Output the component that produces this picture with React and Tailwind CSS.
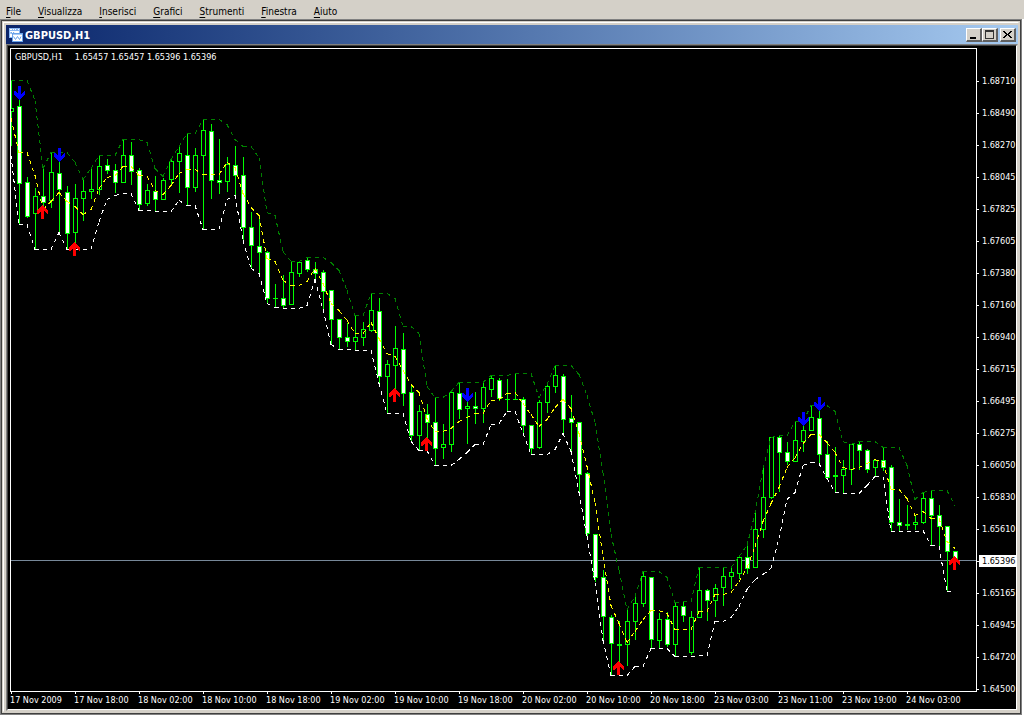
import React from "react";

const MENU = ["File", "Visualizza", "Inserisci", "Grafici", "Strumenti", "Finestra", "Aiuto"];

const PRICES = [
  "1.68710", "1.68490", "1.68270", "1.68045", "1.67825", "1.67605", "1.67380",
  "1.67160", "1.66940", "1.66715", "1.66495", "1.66275", "1.66050", "1.65830",
  "1.65610", "1.65396", "1.65165", "1.64945", "1.64720", "1.64500",
];
const CURRENT = "1.65396";

const TIMES = [
  "17 Nov 2009", "17 Nov 18:00", "18 Nov 02:00", "18 Nov 10:00", "18 Nov 18:00",
  "19 Nov 02:00", "19 Nov 10:00", "19 Nov 18:00", "20 Nov 02:00", "20 Nov 10:00",
  "20 Nov 18:00", "23 Nov 03:00", "23 Nov 11:00", "23 Nov 19:00", "24 Nov 03:00",
];

// [high, body top, body bottom, low, falling]
const CANDLES = [
  [80, 108, 112, 146, 0], [100, 106, 184, 224, 1], [177, 182, 217, 218, 1], [188, 196, 214, 249, 0],
  [168, 196, 203, 208, 1], [152, 172, 201, 208, 0], [162, 173, 190, 232, 1], [186, 192, 234, 249, 1],
  [184, 198, 233, 249, 0], [179, 191, 199, 221, 0], [168, 189, 192, 199, 0], [155, 166, 190, 195, 0],
  [159, 165, 171, 174, 1], [164, 170, 183, 193, 1], [139, 155, 183, 183, 0], [142, 155, 172, 185, 1],
  [168, 170, 205, 210, 1], [184, 190, 204, 206, 0], [176, 191, 200, 211, 1], [178, 180, 200, 200, 0],
  [159, 161, 180, 184, 0], [146, 153, 162, 193, 0], [133, 155, 188, 205, 1], [148, 155, 188, 192, 0],
  [119, 130, 156, 229, 0], [124, 131, 181, 199, 1], [139, 180, 183, 194, 1], [157, 164, 182, 192, 0],
  [146, 165, 176, 195, 1], [157, 175, 228, 240, 1], [212, 227, 246, 268, 1], [215, 246, 253, 273, 1],
  [251, 252, 299, 303, 1], [284, 298, 299, 307, 0], [275, 298, 306, 308, 1], [261, 272, 305, 305, 0],
  [261, 262, 274, 277, 0], [257, 260, 270, 272, 1], [262, 269, 274, 279, 1], [270, 272, 292, 309, 1],
  [290, 290, 320, 344, 1], [319, 319, 338, 349, 1], [323, 337, 342, 347, 1], [315, 337, 342, 350, 0],
  [322, 329, 338, 346, 0], [293, 310, 331, 332, 0], [298, 311, 377, 383, 1], [360, 364, 377, 413, 0],
  [326, 348, 366, 390, 0], [333, 349, 394, 406, 1], [386, 392, 436, 441, 1], [405, 411, 436, 450, 0],
  [404, 414, 423, 438, 1], [397, 422, 449, 465, 1], [424, 444, 448, 459, 0], [391, 392, 445, 452, 0],
  [382, 393, 410, 419, 1], [402, 406, 409, 444, 0], [392, 406, 409, 424, 1], [382, 387, 409, 423, 0],
  [375, 378, 390, 397, 0], [378, 380, 399, 401, 1], [379, 399, 400, 411, 0], [373, 399, 400, 400, 0],
  [397, 399, 426, 433, 1], [425, 425, 449, 454, 1], [400, 402, 448, 449, 0], [384, 386, 403, 413, 0],
  [365, 375, 387, 393, 0], [374, 376, 420, 433, 1], [395, 418, 423, 451, 1], [422, 422, 475, 492, 1],
  [472, 473, 534, 536, 1], [534, 534, 578, 582, 1], [570, 577, 617, 640, 1], [615, 617, 644, 675, 1],
  [621, 644, 646, 663, 0], [609, 621, 645, 666, 0], [596, 603, 622, 640, 0], [571, 576, 604, 607, 0],
  [577, 577, 640, 648, 1], [613, 619, 641, 648, 0], [612, 619, 645, 647, 1], [602, 606, 645, 656, 0],
  [601, 606, 616, 622, 1], [611, 617, 653, 655, 0], [567, 590, 618, 618, 0], [589, 590, 601, 621, 1],
  [584, 588, 601, 617, 0], [567, 576, 588, 606, 0], [567, 572, 577, 589, 0], [556, 557, 574, 579, 0],
  [545, 557, 569, 574, 1], [513, 529, 568, 568, 0], [468, 497, 530, 538, 0], [437, 437, 498, 499, 0],
  [435, 437, 453, 492, 1], [442, 452, 462, 465, 1], [421, 440, 462, 462, 0], [426, 430, 442, 452, 0],
  [405, 417, 431, 431, 0], [411, 418, 455, 463, 1], [441, 454, 478, 478, 1], [447, 475, 477, 492, 0],
  [460, 469, 476, 493, 0], [444, 444, 470, 485, 0], [441, 444, 451, 470, 1], [449, 450, 470, 473, 1],
  [460, 460, 468, 476, 0], [447, 460, 468, 471, 1], [465, 467, 523, 531, 1], [499, 522, 526, 531, 1],
  [505, 524, 526, 530, 0], [515, 522, 525, 530, 0], [492, 498, 523, 524, 0], [490, 498, 516, 545, 1],
  [505, 515, 527, 546, 1], [526, 526, 552, 591, 1], [551, 551, 559, 559, 1],
];

const DOWN = [[19.5, 100], [59.5, 162], [467.5, 402], [803.5, 426], [819.5, 411]];
const UP = [[42.5, 205], [74.5, 242], [394.5, 388], [426.5, 437], [618.5, 661], [954.5, 556]];

const cx = (i) => 11 + i * 8;
const last3 = (i, k) => CANDLES.slice(Math.max(0, i - 2), i + 1).map((c) => c[k]);
const upper = CANDLES.map((_, i) => Math.min(...last3(i, 0)));
const lower = CANDLES.map((_, i) => (i === 0 ? 155 : Math.max(...last3(i, 3))));
const middle = upper.map((u, i) => Math.round((u + lower[i]) / 2));

// One subpath per bar, so that the dashes start afresh at each bar.
const band = (ys) =>
  ys.slice(1).map((y, i) => `M${cx(i)} ${ys[i] + 0.5}L${cx(i + 1)} ${y + 0.5}`).join("");

const ARROW = "M0 0L5.5 5.5V9H4.5L1.5 6V14H-1.5V6L-4.5 9H-5.5V5.5Z";

function Candle({ i, c }) {
  const x = cx(i);
  const [high, top, bottom, low, falling] = c;
  const h = bottom - top;
  return (
    <g>
      <rect x={x} y={high} width="1" height={Math.max(1, low - high)} fill="#00ff00" />
      <rect x={x - 2} y={top} width="5" height={Math.max(1, h)} fill="#00ff00" />
      {h > 2 && (
        <rect x={x - 1} y={top + 1} width="3" height={h - 2} fill={falling ? "#ffffff" : "#000000"} />
      )}
    </g>
  );
}

function Chart() {
  return (
    <svg
      className="block h-[642px] w-full"
      viewBox="11 49 965 642"
      preserveAspectRatio="none"
      shapeRendering="crispEdges"
      role="img"
      aria-label="GBPUSD,H1"
    >
      <rect x="11" y="560" width="965" height="1" fill="#778899" />
      {CANDLES.map((c, i) => <Candle key={i} i={i} c={c} />)}
      <g fill="none" strokeWidth="1" strokeDasharray="4 4">
        <path d={band(upper)} stroke="#008000" />
        <path d={band(lower)} stroke="#ffffff" />
        <path d={band(middle)} stroke="#ffff00" />
      </g>
      {DOWN.map(([x, y]) => (
        <path key={x} d={ARROW} transform={`translate(${x} ${y}) scale(1 -1)`} fill="#0000ff" />
      ))}
      {UP.map(([x, y]) => (
        <path key={x} d={ARROW} transform={`translate(${x} ${y})`} fill="#ff0000" />
      ))}
    </svg>
  );
}

function ChartIcon() {
  return (
    <svg className="h-4 w-4 shrink-0" viewBox="0 0 16 16" aria-hidden="true">
      <g shapeRendering="crispEdges">
        <rect x="1" y="1" width="11" height="10" fill="#8ab8f4" />
        <rect x="2" y="4" width="9" height="6" fill="#ffffff" />
        <path d="M2 2h2v1h-2zM5 2h1v1h-1zM7 2h1v1h-1zM10 2h1v1h-1z" fill="#ffffff" />
        <rect x="4" y="6" width="11" height="9" fill="#6aa3ea" />
        <rect x="5" y="7" width="9" height="1" fill="#a9cbf7" />
        <rect x="5" y="8" width="9" height="6" fill="#ffffff" />
      </g>
      <path d="M3 7V5l1.500 2L6 5" fill="none" stroke="#6aa3ea" />
      <path d="M5.500 9.500L7.500 12.500L9.500 9.500L11.500 12.500L13 9.500" fill="none" stroke="#6aa3ea" />
    </svg>
  );
}

function WindowButton({ label, children }) {
  return (
    <button
      type="button"
      aria-label={label}
      className="flex h-[14px] w-4 items-center justify-center border-t border-r-2 border-b-2 border-l border-t-white border-r-[#606060] border-b-[#606060] border-l-white bg-[#d4d0c8]"
    >
      <svg className="h-[11px] w-[13px]" viewBox="0 0 13 11" shapeRendering="crispEdges" aria-hidden="true">
        {children}
      </svg>
    </button>
  );
}

export default function App() {
  return (
    <div className="bg-[#d4d0c8] font-['DejaVu_Sans_Condensed','DejaVu_Sans',sans-serif] text-black">
      <nav className="flex h-[19px] items-end gap-[17px] pl-[6px] text-[10px] leading-[14px]">
        {MENU.map((m) => (
          <button key={m} type="button">
            <span className="underline underline-offset-2">{m[0]}</span>
            {m.slice(1)}
          </button>
        ))}
      </nav>

      <main className="bg-white pr-[2px] pb-[2px]">
        <div className="border border-[#808080]">
          <div className="border border-[#404040] bg-[#d4d0c8] p-px">
            <div className="border border-t-white border-r-[#d4d0c8] border-b-[#d4d0c8] border-l-white pt-[2px] pl-[2px]">
              <header className="flex h-[19px] items-center bg-linear-to-r from-[#0a246a] to-[#a6caf0] pr-[2px] pl-[2px]">
                <ChartIcon />
                <h1 className="flex-1 pt-[2px] pl-px text-[11px] leading-4 font-bold text-white">GBPUSD,H1</h1>
                <WindowButton label="Riduci a icona">
                  <rect x="3" y="8" width="6" height="2" fill="#000" />
                </WindowButton>
                <WindowButton label="Ingrandisci">
                  <path d="M2 1h9v9h-9zM3 3v6h7v-6z" fill="#333" fillRule="evenodd" />
                </WindowButton>
                <span className="w-[2px]" />
                <WindowButton label="Chiudi">
                  <path
                    d="M2 2h2v1h1v1h1v1h1v-1h1v-1h1v-1h2v1h-1v1h-1v1h-1v1h1v1h1v1h1v1h-2v-1h-1v-1h-1v-1h-1v1h-1v1h-1v1h-2v-1h1v-1h1v-1h1v-1h-1v-1h-1v-1h-1z"
                    fill="#000"
                  />
                </WindowButton>
              </header>

              <div className="border border-t-[#808080] border-r-[#d4d0c8] border-b-[#d4d0c8] border-l-[#808080]">
                <div className="border border-t-[#404040] border-r-white border-b-white border-l-[#404040]">
                  <div className="flex bg-black pt-[2px] pl-[2px] text-[9px] leading-3 text-white">
                    <div className="min-w-0 flex-1">
                      <div className="relative border border-white">
                        <Chart />
                        <p className="absolute top-[2px] left-1 flex gap-3">
                          <span>GBPUSD,H1</span>
                          <span>1.65457 1.65457 1.65396 1.65396</span>
                        </p>
                      </div>
                      <div className="flex h-[17px]">
                        {TIMES.map((t) => (
                          <div key={t} className="w-16 shrink-0 whitespace-nowrap last:w-auto">
                            <div className="ml-px h-[2px] w-px bg-white" />
                            {t}
                          </div>
                        ))}
                      </div>
                    </div>
                    <div className="w-[39px] shrink-0 pt-[17px]">
                      {PRICES.map((p) => (
                        <div key={p} className="flex h-8 items-center">
                          <span className="h-px w-[2px] bg-white" />
                          {p === CURRENT ? (
                            <span className="flex-1 bg-white pl-[3px] text-black">{p}</span>
                          ) : (
                            <span className="pl-[3px]">{p}</span>
                          )}
                        </div>
                      ))}
                    </div>
                  </div>
                </div>
              </div>
            </div>
          </div>
        </div>
      </main>
    </div>
  );
}
